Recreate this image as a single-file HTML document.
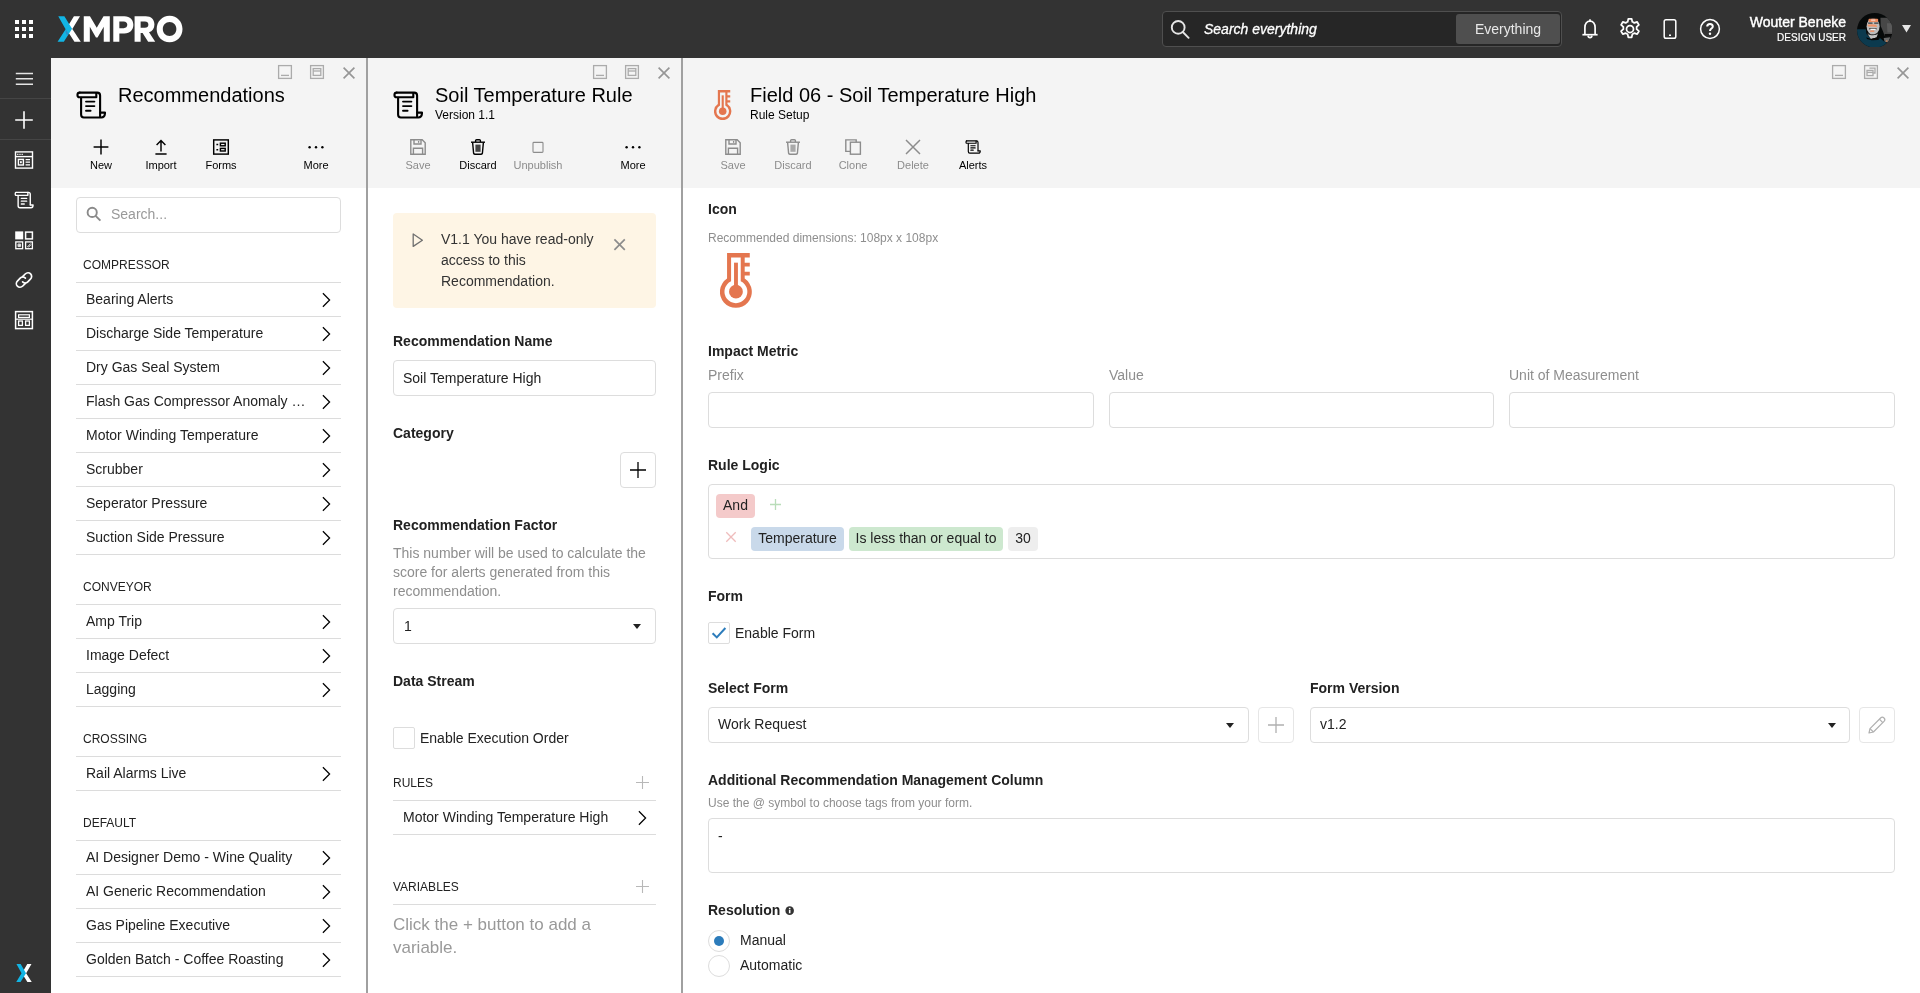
<!DOCTYPE html>
<html>
<head>
<meta charset="utf-8">
<title>XMPRO</title>
<style>
*{box-sizing:border-box;margin:0;padding:0}
html,body{width:1920px;height:993px;overflow:hidden;background:#fff;font-family:"Liberation Sans",sans-serif;color:#222;}
#root{position:absolute;left:0;top:0;width:1920px;height:993px;overflow:hidden;will-change:transform;background:#fff}
.abs{position:absolute}
#topbar{position:absolute;left:0;top:0;width:1920px;height:58px;background:#333}
#sidebar{position:absolute;left:0;top:58px;width:51px;height:935px;background:#333}
.sep{position:absolute;left:0;width:51px;height:1px;background:#454545}
.panel{position:absolute;top:58px;height:935px;background:#fff;overflow:hidden}
.phead{position:absolute;left:0;top:0;right:0;height:130px;background:#f4f4f4}
.vborder{position:absolute;top:58px;height:935px;width:2px;background:#a0a0a0}
.ptitle{position:absolute;font-size:20px;line-height:24px;color:#000;white-space:nowrap}
.psub{position:absolute;font-size:12px;line-height:14px;color:#000;white-space:nowrap}
.tb{position:absolute;top:81px;width:60px;height:40px;text-align:center;font-size:11px;color:#000}
.tb svg{position:absolute;left:22px;top:0;width:16px;height:16px;overflow:visible}
.tb span{position:absolute;left:0;right:0;top:20px;line-height:13px}
.tb.dis{color:#8c8c8c}
.wc{position:absolute;top:7px;width:14px;height:14px;overflow:visible}
.line{position:absolute;height:1px;background:#dcdcdc}
.ghead{position:absolute;font-size:12px;line-height:14px;color:#222;white-space:nowrap}
.item{position:absolute;font-size:14px;line-height:16px;color:#222;white-space:nowrap}
.chev{position:absolute;width:9px;height:16px;overflow:visible}
.lbl{position:absolute;font-size:14px;line-height:16px;font-weight:bold;color:#222;white-space:nowrap}
.hint{position:absolute;color:#8e8e8e}
.inp{position:absolute;border:1px solid #ddd;border-radius:4px;background:#fff;font-size:14px;color:#222;white-space:nowrap}
.tri{position:absolute;width:0;height:0;border-left:4px solid transparent;border-right:4px solid transparent;border-top:5px solid #222}
.sqbtn{position:absolute;width:36px;height:36px;border:1px solid #ddd;border-radius:4px;background:#fff}
.chip{position:absolute;height:24px;border-radius:4px;font-size:14px;line-height:22px;color:#222;text-align:center;white-space:nowrap}
</style>
</head>
<body>
<div id="root">
<div id="topbar">
  <!-- app grid -->
  <svg class="abs" style="left:15px;top:20px" width="18" height="18" viewBox="0 0 18 18" fill="#fff">
    <rect x="0" y="0" width="4" height="4"/><rect x="7" y="0" width="4" height="4"/><rect x="14" y="0" width="4" height="4"/>
    <rect x="0" y="7" width="4" height="4"/><rect x="7" y="7" width="4" height="4"/><rect x="14" y="7" width="4" height="4"/>
    <rect x="0" y="14" width="4" height="4"/><rect x="7" y="14" width="4" height="4"/><rect x="14" y="14" width="4" height="4"/>
  </svg>
  <!-- logo -->
  <svg class="abs" style="left:50px;top:8px" width="140" height="42" viewBox="0 0 1920 576">
    <polygon fill="#fff" points="412,112 328,112 222,288 335,462 422,462 306,288"/>
    <polygon fill="#12b5e5" points="113,112 197,112 303,286 190,462 104,462 214,290"/>
    <polygon fill="#2b8fc9" points="214,290 232,318 252,352 236,378 214,340"/>
    <polygon fill="#fff" points="463,462 463,112 548,112 641,272 734,112 820,112 820,462 737,462 737,256 652,404 630,404 546,256 546,462"/>
    <path fill="#fff" fill-rule="evenodd" d="M868,462 V112 H1020 C1100,112 1143,165 1143,231 C1143,297 1100,350 1020,350 H951 V462 Z M951,186 V276 H1010 C1042,276 1060,258 1060,231 C1060,204 1042,186 1010,186 Z"/>
    <path fill="#fff" fill-rule="evenodd" d="M1160,462 V112 H1312 C1390,112 1432,160 1432,227 C1432,280 1404,318 1358,334 L1443,462 H1346 L1270,344 H1243 V462 Z M1243,186 V270 H1302 C1332,270 1349,253 1349,228 C1349,203 1332,186 1302,186 Z"/>
    <path fill="#fff" fill-rule="evenodd" d="M1640,105 C1742,105 1817,186 1817,288 C1817,390 1742,470 1640,470 C1538,470 1463,390 1463,288 C1463,186 1538,105 1640,105 Z M1640,192 C1586,192 1547,234 1547,288 C1547,342 1586,384 1640,384 C1694,384 1733,342 1733,288 C1733,234 1694,192 1640,192 Z"/>
  </svg>
  <!-- search -->
  <div class="abs" style="left:1162px;top:11px;width:400px;height:36px;border:1px solid #4f4f4f;border-radius:4px;background:#262626"></div>
  <svg class="abs" style="left:1170px;top:19px" width="20" height="20" viewBox="0 0 20 20" fill="none" stroke="#e6e6e6" stroke-width="1.9">
    <circle cx="8.2" cy="8.4" r="6.4"/><path d="M12.8,13 L18.6,18.8" stroke-linecap="round"/>
  </svg>
  <div class="abs" style="left:1204px;top:20px;font-size:14px;line-height:18px;font-style:italic;color:#fff;white-space:nowrap;-webkit-text-stroke:0.3px #fff">Search everything</div>
  <div class="abs" style="left:1456px;top:14px;width:104px;height:30px;border-radius:3px;background:#4f4f4f;color:#e8e8e8;font-size:14px;line-height:30px;text-align:center">Everything</div>
  <!-- bell -->
  <svg class="abs" style="left:1580px;top:18px" width="20" height="22" viewBox="0 0 20 22" fill="none" stroke="#fff" stroke-width="1.7">
    <path d="M2.4,16.7 H17.6"/>
    <path d="M4.9,16.7 V9.6 C4.9,5.6 7.1,3.1 10,3.1 C12.9,3.1 15.1,5.6 15.1,9.6 V16.7"/>
    <path d="M10,1.2 V3.2" stroke-width="1.6"/>
    <path d="M8.1,17.6 C8.2,19 9,19.6 10,19.6 C11,19.6 11.8,19 11.9,17.6"/>
  </svg>
  <!-- gear -->
  <svg class="abs" style="left:1618px;top:17px" width="24" height="24" viewBox="0 0 24 24" fill="none" stroke="#fff" stroke-width="1.75" stroke-linejoin="round">
    <circle cx="12" cy="12" r="3.5"/>
    <path d="M10.3,1.8 h3.4 l0.6,3 a7.6,7.6 0 0 1 2,1.15 l2.9,-1 1.7,2.95 -2.3,2 a7.6,7.6 0 0 1 0,2.3 l2.3,2 -1.7,2.95 -2.9,-1 a7.6,7.6 0 0 1 -2,1.15 l-0.6,3 h-3.4 l-0.6,-3 a7.6,7.6 0 0 1 -2,-1.15 l-2.9,1 -1.7,-2.95 2.3,-2 a7.6,7.6 0 0 1 0,-2.3 l-2.3,-2 1.7,-2.95 2.9,1 a7.6,7.6 0 0 1 2,-1.15 z"/>
  </svg>
  <!-- phone -->
  <svg class="abs" style="left:1662px;top:18px" width="16" height="22" viewBox="0 0 16 22" fill="none" stroke="#fff" stroke-width="1.5">
    <rect x="2.2" y="1.8" width="11.6" height="18.4" rx="1.8"/>
    <path d="M7,17.2 h2" stroke-width="1.4"/>
  </svg>
  <!-- help -->
  <svg class="abs" style="left:1699px;top:18px" width="22" height="22" viewBox="0 0 22 22" fill="none" stroke="#fff" stroke-width="1.5">
    <circle cx="11" cy="11" r="9.4"/>
    <path d="M8.2,8.6 C8.2,6.9 9.4,5.9 11,5.9 C12.6,5.9 13.8,6.9 13.8,8.4 C13.8,10.6 11,10.6 11,12.9" stroke-width="2"/>
    <circle cx="11" cy="15.7" r="1.2" fill="#fff" stroke="none"/>
  </svg>
  <div class="abs" style="right:74px;top:14px;font-size:14px;line-height:16px;color:#fff;white-space:nowrap;-webkit-text-stroke:0.4px #fff">Wouter Beneke</div>
  <div class="abs" style="right:74px;top:32px;font-size:10px;line-height:12px;color:#fff;white-space:nowrap;-webkit-text-stroke:0.2px #fff">DESIGN USER</div>
  <!-- avatar -->
  <svg class="abs" style="left:1856.7px;top:12.5px" width="35.5" height="34.6" viewBox="145 140 765 745">
    <defs><clipPath id="av"><ellipse cx="527.5" cy="512.5" rx="382" ry="372"/></clipPath></defs>
    <g clip-path="url(#av)">
      <rect x="145" y="140" width="765" height="745" fill="#060909"/>
      <polygon points="650,240 920,240 920,640 745,640 700,520 655,420" fill="#474747"/>
      <polygon points="790,360 900,360 900,560 800,560" fill="#5a5a5a"/>
      <polygon points="740,590 900,590 900,640 745,650" fill="#0a0a0a"/>
      <polygon points="720,680 860,660 820,780 740,760" fill="#6a6a6a"/>
      <circle cx="787" cy="745" r="16" fill="#f08a4a"/>
      <polygon points="145,490 335,490 350,590 470,720 640,680 720,750 790,785 700,890 145,890" fill="#0c3a4e"/>
      <polygon points="370,585 595,585 565,670 445,700" fill="#c2c2c2"/>
      <polygon points="345,660 445,700 565,670 640,690 600,720 460,725 360,700" fill="#050505"/>
      <ellipse cx="492" cy="425" rx="140" ry="185" fill="#bdbdbd"/>
      <path d="M352,380 C340,250 420,215 495,215 C580,215 640,260 632,390 C618,300 590,262 495,262 C410,262 370,300 352,380 Z" fill="#0a0c0c"/>
      <rect x="395" y="262" width="205" height="70" rx="20" fill="#ee8a5e"/>
      <rect x="450" y="275" width="90" height="40" fill="#f5c4b0"/>
      <rect x="385" y="345" width="95" height="26" fill="#3a3a3a"/><rect x="515" y="345" width="95" height="26" fill="#3a3a3a"/>
      <polygon points="365,395 460,380 560,395 580,440 470,430 385,430" fill="#f19468"/>
      <rect x="405" y="462" width="165" height="34" rx="10" fill="#4a4a4a"/>
      <rect x="432" y="478" width="118" height="26" rx="8" fill="#f4f4f4"/>
      <rect x="425" y="518" width="95" height="26" rx="10" fill="#ef8557"/>
      <path d="M370,560 C420,610 540,610 600,560 L590,600 C540,625 430,625 380,595 Z" fill="#2a2a2a"/>
    </g>
  </svg>
  <svg class="abs" style="left:1902px;top:25px" width="9" height="8" viewBox="0 0 9 8"><polygon points="0,0 9,0 4.5,7.4" fill="#e6e6e6"/></svg>
</div>
<div id="sidebar">
  <div class="sep" style="top:40px"></div>
  <div class="sep" style="top:81px"></div>
  <!-- hamburger -->
  <svg class="abs" style="left:15px;top:11px" width="20" height="18" viewBox="0 0 20 18" stroke="#e4e4e4" stroke-width="1.5"><path d="M0.8,4.4 H18 M0.8,9.8 H18 M0.8,15.2 H18"/></svg>
  <!-- plus -->
  <svg class="abs" style="left:14px;top:52px" width="20" height="20" viewBox="0 0 20 20" stroke="#fff" stroke-width="1.6"><path d="M10,1.2 V18.8 M1.2,10 H18.8"/></svg>
  <!-- app window -->
  <svg class="abs" style="left:14px;top:92px" width="20" height="20" viewBox="0 0 20 20" fill="none" stroke="#fff" stroke-width="1.4">
    <rect x="1.5" y="1.9" width="17" height="16.2"/><path d="M1.5,6.6 H18.5"/><path d="M3.2,4.3 h1.2 M5.4,4.3 h1.2 M7.6,4.3 h1.2" stroke-width="1.2"/>
    <rect x="4.4" y="9.4" width="5" height="5.6"/><rect x="6" y="11.2" width="1.8" height="2" fill="#fff" stroke="none"/>
    <path d="M11.6,9.6 H16 M11.6,12.2 H16 M11.6,14.8 H16" stroke-width="1.2"/>
  </svg>
  <!-- scroll -->
  <svg class="abs" style="left:14px;top:132px" width="20" height="20" viewBox="0 0 30 30" fill="none" stroke="#fff" stroke-width="2.1" stroke-linejoin="round" stroke-linecap="round">
    <path d="M3,3.6 H21.6 C23.4,3.6 24.4,4.8 24.4,6.4 V22.2"/><path d="M3,3.6 C1.6,3.6 1.4,8 3,8 H20.8 V3.8"/><path d="M6.2,8.4 V23.6 C6.2,25.6 7.4,26.6 9,26.6 H25.4 C27.6,26.6 28.6,25.2 28.6,22.4 H24.4"/>
    <path d="M11,12.6 H19 M11,16.8 H19 M11,21 H15.4" stroke-width="2"/>
  </svg>
  <!-- four squares -->
  <svg class="abs" style="left:14px;top:172px" width="20" height="20" viewBox="0 0 20 20" fill="none" stroke="#fff" stroke-width="1.3">
    <rect x="1.2" y="1.4" width="8" height="8" fill="#fff" stroke="none"/>
    <rect x="11.6" y="2.1" width="6.8" height="6.8" stroke-width="1.5"/>
    <rect x="1.8" y="11.9" width="6.8" height="6.8"/><path d="M4,14 h2.6 v2.6 h-2.6 z M5.3,14 v2.6 M4,15.3 h2.6" stroke-width="0.8"/>
    <rect x="11.6" y="11.9" width="6.8" height="6.8"/><path d="M13.4,17 L16.6,13.6 M14.4,17.4 L17,14.6" stroke-width="0.9"/>
  </svg>
  <!-- link -->
  <svg class="abs" style="left:14px;top:212px" width="20" height="20" viewBox="0 0 20 20" fill="none" stroke="#fff" stroke-width="1.7" stroke-linecap="round">
    <path d="M8.6,6.6 L11.2,4 C12.8,2.4 15.2,2.4 16.6,3.8 C18,5.2 18,7.6 16.4,9.2 L13.8,11.8 C12.4,13.2 10,13.2 8.6,11.8"/>
    <path d="M11.4,13.4 L8.8,16 C7.2,17.6 4.8,17.6 3.4,16.2 C2,14.8 2,12.4 3.6,10.8 L6.2,8.2 C7.6,6.8 10,6.8 11.4,8.2"/>
  </svg>
  <!-- layout/calc -->
  <svg class="abs" style="left:14px;top:252px" width="20" height="20" viewBox="0 0 20 20" fill="none" stroke="#fff" stroke-width="1.5">
    <rect x="1.6" y="1.6" width="16.8" height="17"/><rect x="4.6" y="4.8" width="10.8" height="2.6" stroke-width="1.2"/>
    <rect x="4.6" y="11" width="3.8" height="4.4" stroke-width="1.3"/><rect x="11.6" y="11" width="3.8" height="4.4" stroke-width="1.3"/>
    <path d="M1.6,9.2 H18.4" stroke-width="1.2"/>
  </svg>
  <!-- bottom X -->
  <svg class="abs" style="left:16px;top:905.7px" width="16" height="18.4" viewBox="104 112 318 350" preserveAspectRatio="none">
    <polygon fill="#fff" points="412,112 328,112 222,288 335,462 422,462 306,288"/>
    <polygon fill="#12b5e5" points="113,112 197,112 303,286 190,462 104,462 214,290"/>
  </svg>
</div>

<div class="panel" id="p1" style="left:51px;width:315px">
<div class="phead"></div>
<svg class="wc" style="left:227px" viewBox="0 0 14 14" fill="none" stroke="#ababab" stroke-width="1.3"><rect x="0.6" y="0.6" width="12.8" height="12.8"/><path d="M3,10.4 H11"/></svg><svg class="wc" style="left:259px" viewBox="0 0 14 14" fill="none" stroke="#ababab" stroke-width="1.3"><rect x="0.6" y="0.6" width="12.8" height="12.8"/><rect x="3.2" y="3.6" width="7.6" height="6.8"/><path d="M3.2,6 H10.8"/></svg><svg class="wc" style="left:292px;top:9px;width:12px;height:12px" viewBox="0 0 12 12" fill="none" stroke="#969696" stroke-width="1.65"><path d="M0.6,0.6 L11.4,11.4 M11.4,0.6 L0.6,11.4"/></svg>
<svg class="abs" style="left:25px;top:33px" width="30" height="28" viewBox="0 0 30 28" fill="none" stroke="#000" stroke-width="2.1" stroke-linejoin="round" stroke-linecap="round">
    <path d="M3.7,1.6 H21.2 C23.2,1.6 24.1,2.8 24.1,4.6 V25.8"/><path d="M3.7,1.6 C0.7,1.6 0.7,6.3 3.7,6.3 H20.3 V2.2"/><path d="M5.1,6.8 V23.6 C5.1,25.5 6.1,26.5 7.9,26.5 H25.4 C27.9,26.5 29,25 29,21.6 H24.3"/>
    <path d="M10,10.6 H18.4 M10,15.1 H18.4 M10,19.7 H14.6" stroke-width="1.8900000000000001"/></svg>
<div class="ptitle" style="left:67px;top:25px">Recommendations</div>
<div class="tb" style="left:20px"><svg viewBox="0 0 16 16" fill="none" stroke="currentColor" stroke-width="1.45"><path d="M8,0.6 V15.4 M0.6,8 H15.4"/></svg><span>New</span></div>
<div class="tb" style="left:80px"><svg viewBox="0 0 16 16" fill="none" stroke="currentColor" stroke-width="1.45"><path d="M8,12.4 V1.6 M3.6,6 L8,1.5 L12.4,6 M2.4,15 H13.6"/></svg><span>Import</span></div>
<div class="tb" style="left:140px"><svg viewBox="0 0 16 16" fill="none" stroke="currentColor" stroke-width="1.45"><rect x="0.7" y="0.9" width="14.6" height="14.2"/><rect x="7.4" y="4.2" width="4.8" height="2.6"/><rect x="7.4" y="9.4" width="4.8" height="2.6"/><path d="M3.4,5.5 h1.8 M3.4,10.7 h1.8" stroke-width="1.6"/></svg><span>Forms</span></div>
<div class="tb" style="left:235px"><svg viewBox="0 0 16 16" fill="currentColor"><circle cx="1.6" cy="8.2" r="1.2"/><circle cx="8" cy="8.2" r="1.2"/><circle cx="14.4" cy="8.2" r="1.2"/></svg><span>More</span></div>
<div class="inp" style="left:25px;top:139px;width:265px;height:36px"></div>
<svg class="abs" style="left:35px;top:148px" width="16" height="16" viewBox="0 0 16 16" fill="none" stroke="#8a8a8a" stroke-width="1.9"><circle cx="6.2" cy="6.4" r="4.6"/><path d="M9.6,9.8 L14.4,14.6"/></svg>
<div class="abs" style="left:60px;top:148px;font-size:14px;line-height:16px;color:#999">Search...</div>
<div class="ghead" style="left:32px;top:200px">COMPRESSOR</div>
<div class="line" style="left:25px;width:265px;top:224px"></div>
<div class="item" style="left:35px;top:233px">Bearing Alerts</div>
<svg class="chev" style="left:271px;top:233.5px" viewBox="0 0 9 16" fill="none" stroke="#000" stroke-width="1.25"><path d="M0.9,1.2 L7.6,8 L0.9,14.8"/></svg>
<div class="line" style="left:25px;width:265px;top:258px"></div>
<div class="item" style="left:35px;top:267px">Discharge Side Temperature</div>
<svg class="chev" style="left:271px;top:267.5px" viewBox="0 0 9 16" fill="none" stroke="#000" stroke-width="1.25"><path d="M0.9,1.2 L7.6,8 L0.9,14.8"/></svg>
<div class="line" style="left:25px;width:265px;top:292px"></div>
<div class="item" style="left:35px;top:301px">Dry Gas Seal System</div>
<svg class="chev" style="left:271px;top:301.5px" viewBox="0 0 9 16" fill="none" stroke="#000" stroke-width="1.25"><path d="M0.9,1.2 L7.6,8 L0.9,14.8"/></svg>
<div class="line" style="left:25px;width:265px;top:326px"></div>
<div class="item" style="left:35px;top:335px">Flash Gas Compressor Anomaly …</div>
<svg class="chev" style="left:271px;top:335.5px" viewBox="0 0 9 16" fill="none" stroke="#000" stroke-width="1.25"><path d="M0.9,1.2 L7.6,8 L0.9,14.8"/></svg>
<div class="line" style="left:25px;width:265px;top:360px"></div>
<div class="item" style="left:35px;top:369px">Motor Winding Temperature</div>
<svg class="chev" style="left:271px;top:369.5px" viewBox="0 0 9 16" fill="none" stroke="#000" stroke-width="1.25"><path d="M0.9,1.2 L7.6,8 L0.9,14.8"/></svg>
<div class="line" style="left:25px;width:265px;top:394px"></div>
<div class="item" style="left:35px;top:403px">Scrubber</div>
<svg class="chev" style="left:271px;top:403.5px" viewBox="0 0 9 16" fill="none" stroke="#000" stroke-width="1.25"><path d="M0.9,1.2 L7.6,8 L0.9,14.8"/></svg>
<div class="line" style="left:25px;width:265px;top:428px"></div>
<div class="item" style="left:35px;top:437px">Seperator Pressure</div>
<svg class="chev" style="left:271px;top:437.5px" viewBox="0 0 9 16" fill="none" stroke="#000" stroke-width="1.25"><path d="M0.9,1.2 L7.6,8 L0.9,14.8"/></svg>
<div class="line" style="left:25px;width:265px;top:462px"></div>
<div class="item" style="left:35px;top:471px">Suction Side Pressure</div>
<svg class="chev" style="left:271px;top:471.5px" viewBox="0 0 9 16" fill="none" stroke="#000" stroke-width="1.25"><path d="M0.9,1.2 L7.6,8 L0.9,14.8"/></svg>
<div class="line" style="left:25px;width:265px;top:496px"></div>
<div class="ghead" style="left:32px;top:522px">CONVEYOR</div>
<div class="line" style="left:25px;width:265px;top:546px"></div>
<div class="item" style="left:35px;top:555px">Amp Trip</div>
<svg class="chev" style="left:271px;top:555.5px" viewBox="0 0 9 16" fill="none" stroke="#000" stroke-width="1.25"><path d="M0.9,1.2 L7.6,8 L0.9,14.8"/></svg>
<div class="line" style="left:25px;width:265px;top:580px"></div>
<div class="item" style="left:35px;top:589px">Image Defect</div>
<svg class="chev" style="left:271px;top:589.5px" viewBox="0 0 9 16" fill="none" stroke="#000" stroke-width="1.25"><path d="M0.9,1.2 L7.6,8 L0.9,14.8"/></svg>
<div class="line" style="left:25px;width:265px;top:614px"></div>
<div class="item" style="left:35px;top:623px">Lagging</div>
<svg class="chev" style="left:271px;top:623.5px" viewBox="0 0 9 16" fill="none" stroke="#000" stroke-width="1.25"><path d="M0.9,1.2 L7.6,8 L0.9,14.8"/></svg>
<div class="line" style="left:25px;width:265px;top:648px"></div>
<div class="ghead" style="left:32px;top:674px">CROSSING</div>
<div class="line" style="left:25px;width:265px;top:698px"></div>
<div class="item" style="left:35px;top:707px">Rail Alarms Live</div>
<svg class="chev" style="left:271px;top:707.5px" viewBox="0 0 9 16" fill="none" stroke="#000" stroke-width="1.25"><path d="M0.9,1.2 L7.6,8 L0.9,14.8"/></svg>
<div class="line" style="left:25px;width:265px;top:732px"></div>
<div class="ghead" style="left:32px;top:758px">DEFAULT</div>
<div class="line" style="left:25px;width:265px;top:782px"></div>
<div class="item" style="left:35px;top:791px">AI Designer Demo - Wine Quality</div>
<svg class="chev" style="left:271px;top:791.5px" viewBox="0 0 9 16" fill="none" stroke="#000" stroke-width="1.25"><path d="M0.9,1.2 L7.6,8 L0.9,14.8"/></svg>
<div class="line" style="left:25px;width:265px;top:816px"></div>
<div class="item" style="left:35px;top:825px">AI Generic Recommendation</div>
<svg class="chev" style="left:271px;top:825.5px" viewBox="0 0 9 16" fill="none" stroke="#000" stroke-width="1.25"><path d="M0.9,1.2 L7.6,8 L0.9,14.8"/></svg>
<div class="line" style="left:25px;width:265px;top:850px"></div>
<div class="item" style="left:35px;top:859px">Gas Pipeline Executive</div>
<svg class="chev" style="left:271px;top:859.5px" viewBox="0 0 9 16" fill="none" stroke="#000" stroke-width="1.25"><path d="M0.9,1.2 L7.6,8 L0.9,14.8"/></svg>
<div class="line" style="left:25px;width:265px;top:884px"></div>
<div class="item" style="left:35px;top:893px">Golden Batch - Coffee Roasting</div>
<svg class="chev" style="left:271px;top:893.5px" viewBox="0 0 9 16" fill="none" stroke="#000" stroke-width="1.25"><path d="M0.9,1.2 L7.6,8 L0.9,14.8"/></svg>
<div class="line" style="left:25px;width:265px;top:918px"></div>
</div>
<div class="vborder" style="left:366px"></div>
<div class="panel" id="p2" style="left:368px;width:313px">
<div class="phead"></div>
<svg class="wc" style="left:225px" viewBox="0 0 14 14" fill="none" stroke="#ababab" stroke-width="1.3"><rect x="0.6" y="0.6" width="12.8" height="12.8"/><path d="M3,10.4 H11"/></svg><svg class="wc" style="left:257px" viewBox="0 0 14 14" fill="none" stroke="#ababab" stroke-width="1.3"><rect x="0.6" y="0.6" width="12.8" height="12.8"/><rect x="3.2" y="3.6" width="7.6" height="6.8"/><path d="M3.2,6 H10.8"/></svg><svg class="wc" style="left:290px;top:9px;width:12px;height:12px" viewBox="0 0 12 12" fill="none" stroke="#969696" stroke-width="1.65"><path d="M0.6,0.6 L11.4,11.4 M11.4,0.6 L0.6,11.4"/></svg>
<svg class="abs" style="left:25px;top:33px" width="30" height="28" viewBox="0 0 30 28" fill="none" stroke="#000" stroke-width="2.1" stroke-linejoin="round" stroke-linecap="round">
    <path d="M3.7,1.6 H21.2 C23.2,1.6 24.1,2.8 24.1,4.6 V25.8"/><path d="M3.7,1.6 C0.7,1.6 0.7,6.3 3.7,6.3 H20.3 V2.2"/><path d="M5.1,6.8 V23.6 C5.1,25.5 6.1,26.5 7.9,26.5 H25.4 C27.9,26.5 29,25 29,21.6 H24.3"/>
    <path d="M10,10.6 H18.4 M10,15.1 H18.4 M10,19.7 H14.6" stroke-width="1.8900000000000001"/></svg>
<div class="ptitle" style="left:67px;top:25px">Soil Temperature Rule</div>
<div class="psub" style="left:67px;top:50px">Version 1.1</div>
<div class="tb dis" style="left:20px"><svg viewBox="0 0 16 16" fill="none" stroke="currentColor" stroke-width="1.4"><path d="M0.8,0.8 H12.2 L15.2,3.8 V15.2 H0.8 Z"/><path d="M4,0.8 V5 H11 V0.8"/><path d="M3.4,15.2 V9.2 H12.6 V15.2"/><path d="M8.6,2 V3.8" stroke-width="1.3"/></svg><span>Save</span></div>
<div class="tb" style="left:80px"><svg viewBox="0 0 16 16" fill="none" stroke="currentColor" stroke-width="1.4"><path d="M1,3.2 H15"/><path d="M5.6,3 V1.6 C5.6,1 6,0.7 6.6,0.7 H9.4 C10,0.7 10.4,1 10.4,1.6 V3"/><path d="M2.6,3.4 L3.6,14.2 C3.7,15 4.1,15.3 4.8,15.3 H11.2 C11.9,15.3 12.3,15 12.4,14.2 L13.4,3.4"/><rect x="5.4" y="5.6" width="5.2" height="7.2" fill="currentColor" fill-opacity="0.72" stroke="none"/></svg><span>Discard</span></div>
<div class="tb dis" style="left:140px"><svg viewBox="0 0 16 16" fill="none" stroke="currentColor" stroke-width="1.1"><rect x="3" y="3.4" width="10" height="10" rx="0.8"/></svg><span>Unpublish</span></div>
<div class="tb" style="left:235px"><svg viewBox="0 0 16 16" fill="currentColor"><circle cx="1.6" cy="8.2" r="1.2"/><circle cx="8" cy="8.2" r="1.2"/><circle cx="14.4" cy="8.2" r="1.2"/></svg><span>More</span></div>
<div class="abs" style="left:25px;top:155px;width:263px;height:95px;background:#fef5e5;border-radius:4px"></div>
<svg class="abs" style="left:43px;top:175px;overflow:visible" width="13" height="14" viewBox="0 0 13 14" fill="none" stroke="#707070" stroke-width="1.3" stroke-linejoin="round"><path d="M2.2,1 L11.4,7.2 L2.2,13.4 Z"/></svg>
<div class="abs" style="left:73px;top:173px;font-size:14px;line-height:16px;color:#333;white-space:nowrap;">V1.1 You have read-only</div>
<div class="abs" style="left:73px;top:194px;font-size:14px;line-height:16px;color:#333;white-space:nowrap;">access to this</div>
<div class="abs" style="left:73px;top:215px;font-size:14px;line-height:16px;color:#333;white-space:nowrap;">Recommendation.</div>
<svg class="abs" style="left:245.5px;top:180.5px;overflow:visible" width="11" height="11" viewBox="0 0 11 11" fill="none" stroke="#8c8c8c" stroke-width="1.7"><path d="M0.4,0.4 L10.8,10.8 M10.8,0.4 L0.4,10.8"/></svg>
<div class="abs" style="left:25px;top:275px;font-size:14px;line-height:16px;font-weight:bold;color:#222;white-space:nowrap;">Recommendation Name</div>
<div class="inp" style="left:25px;top:302px;width:263px;height:36px"></div>
<div class="abs" style="left:35px;top:312px;font-size:14px;line-height:16px;color:#222;white-space:nowrap;">Soil Temperature High</div>
<div class="abs" style="left:25px;top:367px;font-size:14px;line-height:16px;font-weight:bold;color:#222;white-space:nowrap;">Category</div>
<div class="sqbtn" style="left:252px;top:394px"></div>
<svg class="abs" style="left:262.0px;top:404.0px;overflow:visible" width="16" height="16" viewBox="0 0 16 16" fill="none" stroke="#000" stroke-width="1.3"><path d="M8.0,0 V16 M0,8.0 H16"/></svg>
<div class="abs" style="left:25px;top:459px;font-size:14px;line-height:16px;font-weight:bold;color:#222;white-space:nowrap;">Recommendation Factor</div>
<div class="abs" style="left:25px;top:487px;font-size:14px;line-height:16px;color:#8e8e8e;white-space:nowrap;">This number will be used to calculate the</div>
<div class="abs" style="left:25px;top:506px;font-size:14px;line-height:16px;color:#8e8e8e;white-space:nowrap;">score for alerts generated from this</div>
<div class="abs" style="left:25px;top:525px;font-size:14px;line-height:16px;color:#8e8e8e;white-space:nowrap;">recommendation.</div>
<div class="inp" style="left:25px;top:550px;width:263px;height:36px"></div>
<div class="abs" style="left:36px;top:560px;font-size:14px;line-height:16px;color:#222;white-space:nowrap;">1</div>
<div class="tri" style="left:265px;top:566px"></div>
<div class="abs" style="left:25px;top:615px;font-size:14px;line-height:16px;font-weight:bold;color:#222;white-space:nowrap;">Data Stream</div>
<div class="abs" style="left:25px;top:669px;width:22px;height:22px;border:1px solid #ddd;border-radius:2px;background:#fff"></div>
<div class="abs" style="left:52px;top:672px;font-size:14px;line-height:16px;color:#222;white-space:nowrap;">Enable Execution Order</div>
<div class="abs" style="left:25px;top:718px;font-size:12px;line-height:14px;color:#222;white-space:nowrap;">RULES</div>
<svg class="abs" style="left:268.0px;top:717.5px;overflow:visible" width="13" height="13" viewBox="0 0 13 13" fill="none" stroke="#b8b8b8" stroke-width="1.1"><path d="M6.5,0 V13 M0,6.5 H13"/></svg>
<div class="line" style="left:25px;width:263px;top:742px"></div>
<div class="abs" style="left:35px;top:751px;font-size:14px;line-height:16px;color:#222;white-space:nowrap;">Motor Winding Temperature High</div>
<svg class="chev" style="left:269.5px;top:751.5px" viewBox="0 0 9 16" fill="none" stroke="#000" stroke-width="1.25"><path d="M0.9,1.2 L7.6,8 L0.9,14.8"/></svg>
<div class="line" style="left:25px;width:263px;top:776px"></div>
<div class="abs" style="left:25px;top:822px;font-size:12px;line-height:14px;color:#222;white-space:nowrap;">VARIABLES</div>
<svg class="abs" style="left:268.0px;top:821.5px;overflow:visible" width="13" height="13" viewBox="0 0 13 13" fill="none" stroke="#b8b8b8" stroke-width="1.1"><path d="M6.5,0 V13 M0,6.5 H13"/></svg>
<div class="line" style="left:25px;width:263px;top:846px"></div>
<div class="abs" style="left:25px;top:857px;font-size:17px;line-height:20px;color:#999;white-space:nowrap;">Click the + button to add a</div>
<div class="abs" style="left:25px;top:880px;font-size:17px;line-height:20px;color:#999;white-space:nowrap;">variable.</div>
</div>
<div class="vborder" style="left:681px"></div>
<div class="panel" id="p3" style="left:683px;width:1237px">
<div class="phead"></div>
<svg class="wc" style="left:1149px" viewBox="0 0 14 14" fill="none" stroke="#ababab" stroke-width="1.3"><rect x="0.6" y="0.6" width="12.8" height="12.8"/><path d="M3,10.4 H11"/></svg><svg class="wc" style="left:1181px" viewBox="0 0 14 14" fill="none" stroke="#ababab" stroke-width="1.3"><rect x="0.6" y="0.6" width="12.8" height="12.8"/><path d="M5.4,3.2 H11 V8 H9.2"/><rect x="3" y="5.4" width="6" height="5.2"/><path d="M3,7.4 H9"/></svg><svg class="wc" style="left:1214px;top:9px;width:12px;height:12px" viewBox="0 0 12 12" fill="none" stroke="#969696" stroke-width="1.65"><path d="M0.6,0.6 L11.4,11.4 M11.4,0.6 L0.6,11.4"/></svg>
<svg class="abs" style="left:31.3px;top:31.8px" width="17.4" height="30.1" viewBox="143 118 452 775" preserveAspectRatio="none">
    <path fill="#e4764f" fill-rule="evenodd" d="M243,118 H565 V183 H493 V255 H565 V308 H493 V385 H565 V438 H493 V481 A226,226 0 1 1 243,481 Z M300,183 H437 V520 A162,162 0 1 1 300,520 Z"/>
    <rect x="342" y="255" width="55" height="415" fill="#e4764f"/>
    <circle cx="369" cy="666" r="98" fill="#e4764f"/></svg>
<div class="ptitle" style="left:67px;top:25px">Field 06 - Soil Temperature High</div>
<div class="psub" style="left:67px;top:50px">Rule Setup</div>
<div class="tb dis" style="left:20px"><svg viewBox="0 0 16 16" fill="none" stroke="currentColor" stroke-width="1.4"><path d="M0.8,0.8 H12.2 L15.2,3.8 V15.2 H0.8 Z"/><path d="M4,0.8 V5 H11 V0.8"/><path d="M3.4,15.2 V9.2 H12.6 V15.2"/><path d="M8.6,2 V3.8" stroke-width="1.3"/></svg><span>Save</span></div>
<div class="tb dis" style="left:80px"><svg viewBox="0 0 16 16" fill="none" stroke="currentColor" stroke-width="1.4"><path d="M1,3.2 H15"/><path d="M5.6,3 V1.6 C5.6,1 6,0.7 6.6,0.7 H9.4 C10,0.7 10.4,1 10.4,1.6 V3"/><path d="M2.6,3.4 L3.6,14.2 C3.7,15 4.1,15.3 4.8,15.3 H11.2 C11.9,15.3 12.3,15 12.4,14.2 L13.4,3.4"/><rect x="5.4" y="5.6" width="5.2" height="7.2" fill="currentColor" fill-opacity="0.72" stroke="none"/></svg><span>Discard</span></div>
<div class="tb dis" style="left:140px"><svg viewBox="0 0 16 16" fill="none" stroke="currentColor" stroke-width="1.4"><path d="M5.4,12.4 H0.8 V0.9 H11.2 V3.2"/><rect x="5.4" y="3.2" width="10" height="12"/></svg><span>Clone</span></div>
<div class="tb dis" style="left:200px"><svg viewBox="0 0 16 16" fill="none" stroke="currentColor" stroke-width="1.45"><path d="M1,1 L15,15 M15,1 L1,15"/></svg><span>Delete</span></div>
<div class="tb" style="left:260px"><svg viewBox="0 0 30 30" fill="none" stroke="currentColor" stroke-width="2.2" stroke-linejoin="round" stroke-linecap="round"><path d="M3,3.6 H21.6 C23.4,3.6 24.4,4.8 24.4,6.4 V22.2"/><path d="M3,3.6 C1.6,3.6 1.4,8 3,8 H20.8 V3.8"/><path d="M6.2,8.4 V23.6 C6.2,25.6 7.4,26.6 9,26.6 H25.4 C27.6,26.6 28.6,25.2 28.6,22.4 H24.4"/><path d="M11,12.6 H19 M11,16.8 H19 M11,21 H15.4" stroke-width="2.2"/></svg><span>Alerts</span></div>
<div class="abs" style="left:25px;top:143px;font-size:14px;line-height:16px;font-weight:bold;color:#222;white-space:nowrap;">Icon</div>
<div class="abs" style="left:25px;top:173px;font-size:12px;line-height:14px;color:#8e8e8e;white-space:nowrap;">Recommended dimensions: 108px x 108px</div>
<svg class="abs" style="left:37.10000000000002px;top:195.3px" width="31.9" height="54.7" viewBox="143 118 452 775" preserveAspectRatio="none">
    <path fill="#e4764f" fill-rule="evenodd" d="M243,118 H565 V183 H493 V255 H565 V308 H493 V385 H565 V438 H493 V481 A226,226 0 1 1 243,481 Z M300,183 H437 V520 A162,162 0 1 1 300,520 Z"/>
    <rect x="342" y="255" width="55" height="415" fill="#e4764f"/>
    <circle cx="369" cy="666" r="98" fill="#e4764f"/></svg>
<div class="abs" style="left:25px;top:285px;font-size:14px;line-height:16px;font-weight:bold;color:#222;white-space:nowrap;">Impact Metric</div>
<div class="abs" style="left:25px;top:309px;font-size:14px;line-height:16px;color:#8e8e8e;white-space:nowrap;">Prefix</div>
<div class="abs" style="left:426px;top:309px;font-size:14px;line-height:16px;color:#8e8e8e;white-space:nowrap;">Value</div>
<div class="abs" style="left:826px;top:309px;font-size:14px;line-height:16px;color:#8e8e8e;white-space:nowrap;">Unit of Measurement</div>
<div class="inp" style="left:25px;top:334px;width:386px;height:36px"></div>
<div class="inp" style="left:426px;top:334px;width:385px;height:36px"></div>
<div class="inp" style="left:826px;top:334px;width:386px;height:36px"></div>
<div class="abs" style="left:25px;top:399px;font-size:14px;line-height:16px;font-weight:bold;color:#222;white-space:nowrap;">Rule Logic</div>
<div class="inp" style="left:25px;top:426px;width:1187px;height:75px"></div>
<div class="chip" style="left:33px;top:436px;width:39px;background:#f4caca">And</div>
<svg class="abs" style="left:86.5px;top:440.5px;overflow:visible" width="11" height="11" viewBox="0 0 11 11" fill="none" stroke="#b9ddb9" stroke-width="1.3"><path d="M5.5,0 V11 M0,5.5 H11"/></svg>
<svg class="abs" style="left:43px;top:474px;overflow:visible" width="10" height="10" viewBox="0 0 10 10" fill="none" stroke="#efbcbc" stroke-width="1.3"><path d="M0.3,0.3 L9.7,9.7 M9.7,0.3 L0.3,9.7"/></svg>
<div class="chip" style="left:68px;top:469px;width:93px;background:#c9d9ea">Temperature</div>
<div class="chip" style="left:166px;top:469px;width:154px;background:#cde8cf">Is less than or equal to</div>
<div class="chip" style="left:325px;top:469px;width:30px;background:#eeeeee">30</div>
<div class="abs" style="left:25px;top:530px;font-size:14px;line-height:16px;font-weight:bold;color:#222;white-space:nowrap;">Form</div>
<div class="abs" style="left:25px;top:564px;width:22px;height:22px;border:1px solid #ddd;border-radius:2px;background:#fff"></div>
<svg class="abs" style="left:29px;top:569px;overflow:visible" width="14" height="12" viewBox="0 0 14 12" fill="none" stroke="#2c7cbb" stroke-width="2"><path d="M0.6,6.2 L4.8,10.4 L13.4,1"/></svg>
<div class="abs" style="left:52px;top:567px;font-size:14px;line-height:16px;color:#222;white-space:nowrap;">Enable Form</div>
<div class="abs" style="left:25px;top:622px;font-size:14px;line-height:16px;font-weight:bold;color:#222;white-space:nowrap;">Select Form</div>
<div class="inp" style="left:25px;top:649px;width:541px;height:36px"></div>
<div class="abs" style="left:35px;top:658px;font-size:14px;line-height:16px;color:#222;white-space:nowrap;">Work Request</div>
<div class="tri" style="left:543px;top:665px"></div>
<div class="sqbtn" style="left:575px;top:649px;border-color:#e6e6e6"></div>
<svg class="abs" style="left:585.0px;top:659.0px;overflow:visible" width="16" height="16" viewBox="0 0 16 16" fill="none" stroke="#b0b0b0" stroke-width="1.3"><path d="M8.0,0 V16 M0,8.0 H16"/></svg>
<div class="abs" style="left:627px;top:622px;font-size:14px;line-height:16px;font-weight:bold;color:#222;white-space:nowrap;">Form Version</div>
<div class="inp" style="left:627px;top:649px;width:540px;height:36px"></div>
<div class="abs" style="left:637px;top:658px;font-size:14px;line-height:16px;color:#222;white-space:nowrap;">v1.2</div>
<div class="tri" style="left:1145px;top:665px"></div>
<div class="sqbtn" style="left:1176px;top:649px;border-color:#e6e6e6"></div>
<svg class="abs" style="left:1185px;top:658px;overflow:visible" width="18" height="18" viewBox="0 0 18 18" fill="none" stroke="#b0b0b0" stroke-width="1.2" stroke-linejoin="round"><path d="M1,17 L2,12.6 L12.6,2 C13.6,1 15,1 16,2 C17,3 17,4.4 16,5.4 L5.4,16 Z"/><path d="M11.4,3.2 L14.8,6.6"/><path d="M2,12.6 L5.4,16"/></svg>
<div class="abs" style="left:25px;top:714px;font-size:14px;line-height:16px;font-weight:bold;color:#222;white-space:nowrap;">Additional Recommendation Management Column</div>
<div class="abs" style="left:25px;top:738px;font-size:12px;line-height:14px;color:#8e8e8e;white-space:nowrap;">Use the @ symbol to choose tags from your form.</div>
<div class="inp" style="left:25px;top:760px;width:1187px;height:55px"></div>
<div class="abs" style="left:35px;top:770px;font-size:14px;line-height:16px;color:#222;white-space:nowrap;">-</div>
<div class="abs" style="left:25px;top:844px;font-size:14px;line-height:16px;font-weight:bold;color:#222;white-space:nowrap;">Resolution</div>
<svg class="abs" style="left:101.5px;top:847.8px" width="9.3" height="9.3" viewBox="0 0 10 10"><circle cx="5" cy="5" r="4.6" fill="#333"/><rect x="4.2" y="4.2" width="1.7" height="3.6" fill="#fff"/><rect x="4.2" y="2" width="1.7" height="1.5" fill="#fff"/></svg>
<div class="abs" style="left:25px;top:872px;width:22px;height:22px;border:1px solid #ddd;border-radius:50%;background:#fff"></div>
<div class="abs" style="left:31px;top:878px;width:10px;height:10px;border-radius:50%;background:#2c7cbb"></div>
<div class="abs" style="left:57px;top:874px;font-size:14px;line-height:16px;color:#222;white-space:nowrap;">Manual</div>
<div class="abs" style="left:25px;top:897px;width:22px;height:22px;border:1px solid #ddd;border-radius:50%;background:#fff"></div>
<div class="abs" style="left:57px;top:899px;font-size:14px;line-height:16px;color:#222;white-space:nowrap;">Automatic</div>
</div>
</div>
</body>
</html>
